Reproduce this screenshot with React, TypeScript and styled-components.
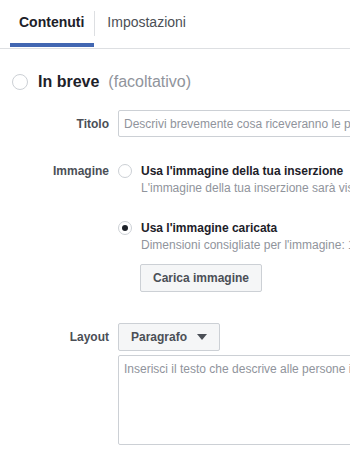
import * as React from "react";
import styled, { createGlobalStyle } from "styled-components";

const GlobalStyle = createGlobalStyle`
  html, body {
    margin: 0;
    padding: 0;
    background: #ffffff;
    overflow: hidden;
  }
  body {
    font-family: "Liberation Sans", Arial, Helvetica, sans-serif;
    color: #1d2129;
  }
`;

const Page = styled.div`
  width: 720px;
  background: #ffffff;
`;

const TabBar = styled.div`
  display: flex;
  align-items: flex-start;
  height: 48px;
  padding-left: 10px;
  border-bottom: 1px solid #dddfe2;
`;

const Tab = styled.div<{ $active?: boolean }>`
  box-sizing: border-box;
  height: 47px;
  display: flex;
  align-items: center;
  padding: 0 10px 0 ${(p) => (p.$active ? "9px" : "12px")};
  font-size: 14px;
  font-weight: ${(p) => (p.$active ? 700 : 400)};
  color: ${(p) => (p.$active ? "#1d2129" : "#4b4f56")};
  border-bottom: 4px solid ${(p) => (p.$active ? "#4267b2" : "transparent")};
`;

const TabDivider = styled.div`
  width: 1px;
  height: 25px;
  margin-top: 11px;
  background: #dddfe2;
`;

const Section = styled.div`
  padding-top: 25px;
`;

const SectionHeader = styled.div`
  display: flex;
  align-items: center;
  gap: 10px;
  padding-left: 12px;
  height: 16px;
`;

const Radio = styled.span<{ $size: number; $checked?: boolean }>`
  box-sizing: border-box;
  flex: none;
  width: ${(p) => p.$size}px;
  height: ${(p) => p.$size}px;
  margin-top: ${(p) => (p.$size < 16 ? 1 : 0)}px;
  border-radius: 50%;
  border: 1px solid #ccd0d5;
  background: #ffffff;
  display: flex;
  align-items: center;
  justify-content: center;

  &::after {
    content: "";
    display: ${(p) => (p.$checked ? "block" : "none")};
    width: 6px;
    height: 6px;
    border-radius: 50%;
    background: #1d2129;
  }
`;

const HeaderTitle = styled.span`
  font-size: 16px;
  font-weight: 700;
  color: #1d2129;
`;

const HeaderHint = styled.span`
  font-size: 16px;
  color: #90949c;
  margin-left: -1px;
`;

const Form = styled.div`
  display: grid;
  grid-template-columns: 109px 1fr;
  column-gap: 9px;
  margin-top: 20px;
`;

const Label = styled.div<{ $top?: number }>`
  font-size: 12px;
  font-weight: 700;
  color: #4b4f56;
  text-align: right;
  padding-top: ${(p) => p.$top ?? 0}px;
  line-height: 16px;
`;

const Field = styled.div<{ $mb?: number }>`
  margin-bottom: ${(p) => p.$mb ?? 0}px;
  display: flex;
  flex-direction: column;
`;

const TextInput = styled.input`
  box-sizing: border-box;
  height: 27px;
  width: 100%;
  border: 1px solid #ccd0d5;
  border-radius: 2px;
  padding: 0 5px;
  font-family: inherit;
  font-size: 12px;
  color: #1d2129;
  outline: none;

  &::placeholder {
    color: #90949c;
  }
`;

const Option = styled.div<{ $mt?: number }>`
  display: flex;
  align-items: flex-start;
  gap: 9px;
  margin-top: ${(p) => p.$mt ?? 0}px;
`;

const OptionBody = styled.div`
  display: flex;
  flex-direction: column;
  white-space: nowrap;
`;

const OptionTitle = styled.div`
  font-size: 12px;
  font-weight: 700;
  line-height: 16px;
  color: #1d2129;
`;

const OptionHint = styled.div`
  font-size: 12px;
  line-height: 16px;
  margin-top: 1px;
  color: #90949c;
`;

const Button = styled.button`
  box-sizing: border-box;
  align-self: flex-start;
  display: inline-flex;
  align-items: center;
  gap: 10px;
  height: 28px;
  padding: 0 12px;
  border: 1px solid #ccd0d5;
  border-radius: 2px;
  background: #f5f6f7;
  font-family: inherit;
  font-size: 12px;
  font-weight: 700;
  color: #4b4f56;
`;

const UploadButton = styled(Button)`
  margin-top: 11px;
  margin-left: -1px;
`;

const TextArea = styled.textarea`
  box-sizing: border-box;
  display: block;
  margin-top: 4px;
  width: 100%;
  height: 90px;
  border: 1px solid #ccd0d5;
  border-radius: 2px;
  padding: 5px 5px;
  resize: none;
  font-family: inherit;
  font-size: 12px;
  line-height: 16px;
  outline: none;

  &::placeholder {
    color: #90949c;
  }
`;

const Caret = () => (
  <svg width="10" height="6" viewBox="0 0 10 6">
    <path d="M0 0 L10 0 L5 6 Z" fill="#4b4f56" />
  </svg>
);

const App: React.FunctionComponent = () => {
  return (
    <Page>
      <GlobalStyle />
      <TabBar>
        <Tab $active>Contenuti</Tab>
        <TabDivider />
        <Tab>Impostazioni</Tab>
      </TabBar>

      <Section>
        <SectionHeader>
          <Radio $size={16} />
          <HeaderTitle>In breve</HeaderTitle>
          <HeaderHint>(facoltativo)</HeaderHint>
        </SectionHeader>

        <Form>
          <Label $top={6}>Titolo</Label>
          <Field $mb={26}>
            <TextInput placeholder="Descrivi brevemente cosa riceveranno le persone quando inviano il modulo" />
          </Field>

          <Label>Immagine</Label>
          <Field $mb={31}>
            <Option>
              <Radio $size={14} />
              <OptionBody>
                <OptionTitle>Usa l'immagine della tua inserzione</OptionTitle>
                <OptionHint>
                  L'immagine della tua inserzione sarà visualizzata nel modulo.
                </OptionHint>
              </OptionBody>
            </Option>
            <Option $mt={24}>
              <Radio $size={14} $checked />
              <OptionBody>
                <OptionTitle>Usa l'immagine caricata</OptionTitle>
                <OptionHint>
                  Dimensioni consigliate per l'immagine: 1200 x 628 pixel
                </OptionHint>
                <UploadButton>Carica immagine</UploadButton>
              </OptionBody>
            </Option>
          </Field>

          <Label $top={6}>Layout</Label>
          <Field>
            <Button>
              Paragrafo
              <Caret />
            </Button>
            <TextArea placeholder="Inserisci il testo che descrive alle persone i vantaggi offerti" />
          </Field>
        </Form>
      </Section>
    </Page>
  );
};

export default App;
